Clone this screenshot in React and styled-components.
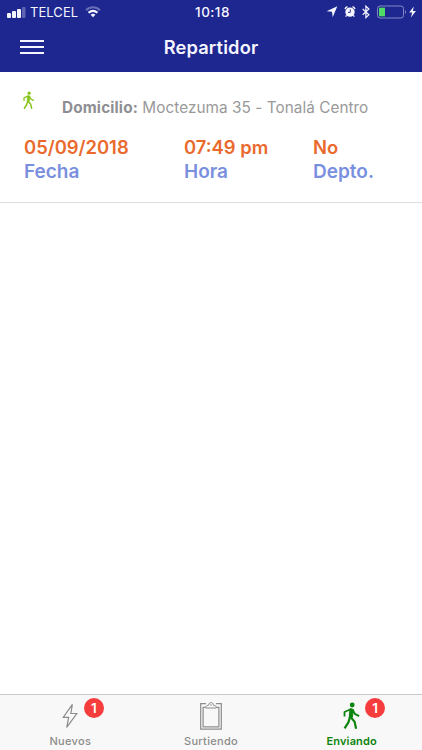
import React from 'react';
import styled, { createGlobalStyle } from 'styled-components';

const GlobalStyle = createGlobalStyle`
  * {
    box-sizing: border-box;
  }

  body {
    margin: 0;
    background: #fff;
    font-family: Inter, Roboto, sans-serif;
  }
`;

const Screen = styled.div`
  display: flex;
  flex-direction: column;
  width: 422px;
  height: 750px;
  overflow: hidden;
  background: #fff;
`;

const Header = styled.header`
  flex: none;
  height: 72px;
  background: #1e268f;
  color: #f4f5ff;
`;

const StatusBar = styled.div`
  display: grid;
  grid-template-columns: 1fr auto 1fr;
  align-items: center;
  height: 24px;
  padding: 0 5px 0 7px;
  line-height: 24px;

  svg {
    display: block;
  }
`;

const Carrier = styled.div`
  display: flex;
  align-items: center;
  gap: 4px;
  font-size: 13px;
  letter-spacing: 0.05px;

  .wifi {
    margin-left: 3px;
  }
`;

const Clock = styled.div`
  padding-left: 1px;
  font-size: 13.5px;
  font-weight: 500;
  letter-spacing: 0.45px;
`;

const Indicators = styled.div`
  display: flex;
  align-items: center;
  justify-content: flex-end;
`;

const Toolbar = styled.div`
  display: grid;
  grid-template-columns: 1fr auto 1fr;
  align-items: center;
  height: 46px;
  padding: 0 20px;
`;

const MenuButton = styled.button`
  display: flex;
  flex-direction: column;
  gap: 4px;
  width: 24px;
  padding: 0;
  border: 0;
  background: none;

  span {
    height: 2px;
    background: #f4f5ff;
  }
`;

const Title = styled.h1`
  margin: 0;
  font-size: 18.3px;
  font-weight: 600;
  letter-spacing: 0.15px;
`;

const Content = styled.main`
  flex: 1;
`;

const Order = styled.article`
  height: 131px;
  padding: 19px 0 0 24px;
  border-bottom: 1px solid #dedede;
`;

const Address = styled.div`
  display: flex;
  height: 44px;

  svg {
    flex: none;
    margin-left: -1px;
    color: #84c318;
  }

  p {
    margin: 7px 0 0 27px;
    color: #999;
    font-size: 15.3px;
    line-height: 20px;
    letter-spacing: 0.06px;
    white-space: nowrap;
  }

  b {
    color: #8e8e93;
    font-weight: 700;
    letter-spacing: 0.15px;
  }
`;

const Details = styled.div`
  display: grid;
  grid-template-columns: 160px 129px auto;
`;

const Detail = styled.div`
  color: #7a90df;
  font-size: 19px;
  font-weight: 600;
  line-height: 25px;
  white-space: nowrap;

  strong {
    display: block;
    color: #ea6a2e;
    font-size: 18.4px;
    font-weight: 600;
    line-height: 24px;
  }
`;

const Tabs = styled.nav`
  display: grid;
  grid-template-columns: repeat(3, 1fr);
  flex: none;
  height: 56px;
  border-top: 1px solid #c8c8c8;
  background: #f8f8f8;
`;

const Tab = styled.div`
  display: flex;
  flex-direction: column;
  align-items: center;
  color: ${({ $active }) => ($active ? '#0d840d' : '#8c8c8c')};
  font-size: 11px;
  font-weight: ${({ $active }) => ($active ? 600 : 500)};
  line-height: 14px;
  letter-spacing: ${({ $active }) => ($active ? '0.15px' : '0.3px')};
`;

const TabIcon = styled.div`
  position: relative;
  display: flex;
  align-items: center;
  justify-content: center;
  width: 30px;
  height: 39px;
  padding-top: 3px;

  svg {
    display: block;
  }
`;

const Badge = styled.span`
  position: absolute;
  top: 3px;
  left: 28.5px;
  width: 20px;
  height: 20px;
  border-radius: 50%;
  background: #f53d3d;
  color: #fff;
  font-size: 13.5px;
  font-weight: 600;
  line-height: 20px;
  letter-spacing: 0;
  text-align: center;
`;

const SignalIcon = () => (
  <svg width="19" height="11" viewBox="0 0 19 11" fill="currentColor">
    <rect x="0" y="6" width="4" height="5" rx="1" />
    <rect x="5" y="4" width="4" height="7" rx="1" />
    <rect x="10" y="2" width="4" height="9" rx="1" />
    <rect x="15" y="0" width="3.5" height="11" rx="1" opacity="0.3" />
  </svg>
);

const WifiIcon = () => (
  <svg className="wifi" width="16" height="12" viewBox="0 0 16 12" fill="none" stroke="currentColor">
    <path d="M1 4.2C5 .3 11 .3 15 4.2" strokeWidth="2" opacity="0.35" />
    <path d="M3.5 6.8c2.7-2.4 6.3-2.4 9 0" strokeWidth="2.1" />
    <path d="M5.6 8.8c1.5-1.3 3.3-1.3 4.8 0L8 11.3z" fill="currentColor" stroke="none" />
  </svg>
);

const StatusIcons = () => (
  <svg width="92" height="16" viewBox="325 4 92 16" fill="none">
    <path d="m337.3 6.2-4.6 11.1-.7-5.5-5.4-.6z" fill="currentColor" />
    <g stroke="currentColor">
      <circle cx="350" cy="12.1" r="4.7" fill="currentColor" stroke="none" />
      <path d="M345.1 9.1a3 3 0 0 1 2.4-2.4M352.5 6.7a3 3 0 0 1 2.4 2.4" strokeWidth="1.5" />
      <path d="m346.6 15.4-1 1.2M353.4 15.4l1 1.2" strokeWidth="1.3" />
      <path d="M350.3 9.4v3h-2.3" stroke="#1e268f" strokeWidth="0.9" />
      <path d="m362.7 9 6.2 5.8-3 2.8V6.2l3 2.8-6.2 5.8" strokeWidth="1.2" />
    </g>
    <rect x="377.5" y="6" width="26" height="12" rx="2.5" stroke="#8289c7" />
    <rect x="379" y="7.7" width="6" height="8.6" fill="#50db68" />
    <path d="M405 10.2c1.5.4 1.5 3.2 0 3.6z" fill="#8289c7" />
    <path d="m413.8 6.4-4.6 6.1h3l-1.3 5 5-6.5h-3z" fill="currentColor" />
  </svg>
);

const WalkIcon = ({ width, height }) => (
  <svg
    width={width}
    height={height}
    viewBox="0.6 0.6 18 28"
    fill="none"
    stroke="currentColor"
    strokeLinejoin="round"
  >
    <circle cx="9.8" cy="3.6" r="2.4" fill="currentColor" stroke="none" />
    <path d="m8.2 7.2 2.8 1-1 7.6-3.2.6.6-7z" fill="currentColor" strokeWidth="1" />
    <path d="M8.6 7.6 2.1 10.6v4.6" strokeWidth="1.8" />
    <path d="m10.2 8.2 2.2 4.2 4.3 2.4" strokeWidth="1.9" />
    <path d="M7.7 15.5 6 21l-3.8 6" strokeWidth="2.2" />
    <path d="m8.3 15.7 3.9 4.6 1.5 7" strokeWidth="2.2" />
  </svg>
);

const FlashIcon = () => (
  <svg width="16" height="26" viewBox="0 0 16 26" fill="none" stroke="currentColor" strokeWidth="1.2">
    <path d="M10.4 1.4 1.2 14.3h5.5L4.7 24.4 14.8 10.5H8.8z" />
  </svg>
);

const ClipboardIcon = () => (
  <svg width="22" height="28" viewBox="0 0 22 28" fill="none" stroke="currentColor">
    <path d="M6 1.7H.7v25.5h20.6V1.7H16" strokeWidth="1.2" />
    <path d="M5 5.4H3.1v19.4h15.8V5.4H17" strokeWidth="1.2" />
    <path d="M5.6 6c0-2 .8-2.5 2.9-2.7C8.7-.3 13.3-.3 13.5 3.3c2.1.2 2.9.7 2.9 2.7z" />
    <circle cx="11" cy="2.9" r=".6" strokeWidth=".6" />
  </svg>
);

const DETAILS = [
  { value: '05/09/2018', label: 'Fecha' },
  { value: '07:49 pm', label: 'Hora' },
  { value: 'No', label: 'Depto.' },
];

const TABS = [
  { label: 'Nuevos', icon: <FlashIcon />, count: 1 },
  { label: 'Surtiendo', icon: <ClipboardIcon /> },
  { label: 'Enviando', icon: <WalkIcon width={18} height={28} />, count: 1, active: true },
];

const App = () => (
  <>
    <GlobalStyle />
    <Screen>
      <Header>
        <StatusBar>
          <Carrier>
            <SignalIcon />
            TELCEL
            <WifiIcon />
          </Carrier>
          <Clock>10:18</Clock>
          <Indicators>
            <StatusIcons />
          </Indicators>
        </StatusBar>
        <Toolbar>
          <MenuButton aria-label="Menú">
            <span />
            <span />
            <span />
          </MenuButton>
          <Title>Repartidor</Title>
        </Toolbar>
      </Header>

      <Content>
        <Order>
          <Address>
            <WalkIcon width={12} height={19} />
            <p>
              <b>Domicilio:</b> Moctezuma 35 - Tonalá Centro
            </p>
          </Address>
          <Details>
            {DETAILS.map(({ value, label }) => (
              <Detail key={label}>
                <strong>{value}</strong>
                {label}
              </Detail>
            ))}
          </Details>
        </Order>
      </Content>

      <Tabs>
        {TABS.map(({ label, icon, count, active }) => (
          <Tab key={label} $active={active}>
            <TabIcon>
              {icon}
              {count && <Badge>{count}</Badge>}
            </TabIcon>
            {label}
          </Tab>
        ))}
      </Tabs>
    </Screen>
  </>
);

export default App;
